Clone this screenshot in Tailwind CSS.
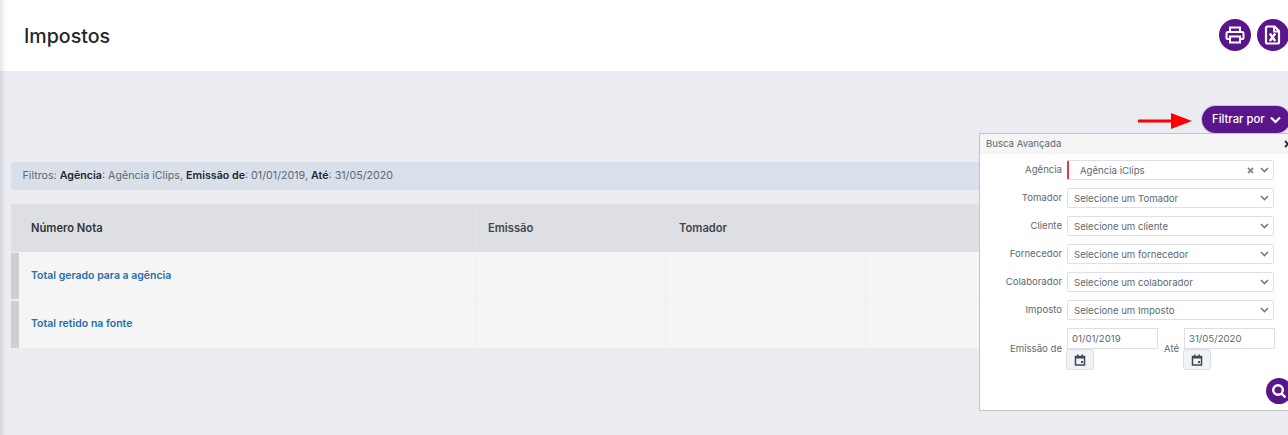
<!DOCTYPE html>
<html lang="pt-BR">
<head>
    <meta charset="UTF-8">
    <meta name="viewport" content="width=device-width, initial-scale=1.0">
    <title>Impostos</title>
    <script src="https://cdn.jsdelivr.net/npm/@tailwindcss/browser@4"></script>
</head>
<body class="bg-[#ebecf1] h-[435px] overflow-hidden relative font-['Inter',sans-serif] text-[#5c6873]">
    <!-- sombra do menu lateral -->
    <div class="absolute left-0 top-0 bottom-0 w-[6px] bg-gradient-to-r from-black/10 to-transparent z-10"></div>

    <header class="bg-white h-[71px] pl-6 flex items-center justify-between">
        <h1 class="text-[19.600px] font-medium text-[#23282c] pt-[2px]">Impostos</h1>
        <div class="flex gap-[6px] w-[69px] shrink-0 pb-[1px]">
            <button class="w-8 h-8 shrink-0 rounded-full bg-[#58168a] flex items-center justify-center">
                <svg class="w-[20px] h-[20px]" viewBox="0 0 20 20" fill="none" stroke="white" stroke-width="2">
                    <path d="M5 7V2.500h10V7"/>
                    <path d="M5 14H2.500a1 1 0 0 1-1-1V8.500a1.500 1.500 0 0 1 1.500-1.500h14a1.500 1.500 0 0 1 1.500 1.500V13a1 1 0 0 1-1 1H15"/>
                    <path d="M5 11.500h10v6H5z"/>
                </svg>
            </button>
            <button class="w-8 h-8 shrink-0 rounded-full bg-[#58168a] flex items-center justify-center">
                <svg class="w-[18px] h-[20px]" viewBox="0 0 18 20" fill="none" stroke="white" stroke-width="2.200">
                    <path d="M3.500 1.500h7l4.500 4.500v11a1.500 1.500 0 0 1-1.500 1.500h-10A1.500 1.500 0 0 1 2 17V3a1.500 1.500 0 0 1 1.500-1.500z"/>
                    <path d="M10 1.500v5h5" stroke-width="1.800"/>
                    <path d="M5.800 8.500l5.400 7.500M11.200 8.500l-5.400 7.500" stroke-width="2.400"/>
                </svg>
            </button>
        </div>
    </header>

    <main class="pl-[11px] pr-[11px]">
        <div class="flex items-center justify-end h-[27px] mt-[34px] -mr-[11px] relative top-[1px]">
            <svg class="w-[54px] h-[16px] mr-[10px] relative top-[1px]" viewBox="0 0 54 16">
                <path d="M1 8h34" stroke="#ff0000" stroke-width="3" stroke-linecap="round"/>
                <path d="M33 0l21 8-21 8z" fill="#ff0000"/>
            </svg>
            <button class="w-[88px] h-[27px] pl-[10px] rounded-l-full rounded-r-full bg-[#58168a] text-white text-[11.300px] font-medium flex items-center gap-[5px] ring-1 ring-[#58168a]/20 shrink-0 -mr-[2px]">
                Filtrar por
                <svg class="w-[11px] h-[8px]" viewBox="0 0 11 8" fill="none" stroke="white" stroke-width="2.200"><path d="M1 1.500l4.500 4.500 4.500-4.500"/></svg>
            </button>
        </div>

        <div class="mt-[30px] h-[28px] bg-[#dae0ea] rounded-[3px] flex items-center pl-[11.500px] pr-3 text-[10.700px] text-[#5c6873]">
            <p>Filtros: <b class="font-semibold text-[#23282c]">Agência</b>: Agência iClips, <b class="font-semibold text-[#23282c]">Emissão de</b>: 01/01/2019, <b class="font-semibold text-[#23282c]">Até</b>: 31/05/2020</p>
        </div>

        <div class="mt-[14px] text-[10.500px]">
            <div class="grid grid-cols-[8px_456px_1px_190px_200px_1fr] h-[48px] bg-[#dedfe3] text-[11.200px] font-semibold text-[#3f454b] items-center">
                <div></div>
                <div class="pl-3 pt-[1px] text-[#2f353a]">Número Nota</div>
                <div class="h-full border-l border-[#e2e3e6]"></div>
                <div class="pl-3 pt-[1px] h-full flex items-center border-r border-[#e2e3e6]">Emissão</div>
                <div class="pl-[13px] pt-[1px] h-full flex items-center border-r border-[#e2e3e6]">Tomador</div>
                <div></div>
            </div>
            <div class="grid grid-cols-[8px_456px_1px_190px_200px_1fr] h-[48px] bg-[#f5f5f5] border-b border-[#f0f0f0] font-semibold text-[#2a6ea8] items-center">
                <div class="h-full border-t border-[#ebecf1] bg-[#cfcfcf]"></div>
                <div class="pl-3 pt-[1px]">Total gerado para a agência</div>
                <div class="h-full border-l border-[#f0f0f0]"></div>
                <div class="h-full border-r border-[#f0f0f0]"></div>
                <div class="h-full border-r border-[#f0f0f0]"></div>
                <div></div>
            </div>
            <div class="grid grid-cols-[8px_456px_1px_190px_200px_1fr] h-[48px] bg-[#f5f5f5] font-semibold text-[#2a6ea8] items-center">
                <div class="h-full border-t border-[#ebecf1] bg-[#cfcfcf]"></div>
                <div class="pl-3">Total retido na fonte</div>
                <div class="h-full border-l border-[#f0f0f0]"></div>
                <div class="h-full border-r border-[#f0f0f0]"></div>
                <div class="h-full border-r border-[#f0f0f0]"></div>
                <div></div>
            </div>
        </div>
    </main>

    <!-- Busca avancada (painel flutuante) -->
    <aside class="absolute left-[979px] top-[133px] w-[320px] h-[278px] bg-white border border-[#c4c4c4] text-[9.600px] z-20">
        <div class="h-[20px] bg-[#f5f5f5] flex items-center pl-[6px] text-[#5c6873] relative">
            Busca Avançada
            <svg class="absolute left-[304px] top-[6px] w-[8px] h-[8px]" viewBox="0 0 8 8" fill="none" stroke="#23282c" stroke-width="1.800"><path d="M1 1l6 6M7 1L1 7"/></svg>
        </div>

        <div class="pt-[6px] flex flex-col gap-[8px]">
            <div class="flex items-center">
                <label class="w-[82px] text-right">Agência</label>
                <div class="ml-[5px] w-[207px] h-[20px] bg-white border border-[#dce0e6] border-l-2 border-l-[#e8384f] rounded-[2px] flex items-center pl-[11px] pr-[4px]">
                    <span class="flex-1 pt-[2px]">Agência iClips</span>
                    <svg class="w-[7px] h-[7px] mr-[6px]" viewBox="0 0 7 7" fill="none" stroke="#888" stroke-width="1.800"><path d="M1 1l5 5M6 1L1 6"/></svg>
                    <svg class="w-[9px] h-[6px]" viewBox="0 0 9 6" fill="none" stroke="#777" stroke-width="1.600"><path d="M1 1l3.500 3.500L8 1"/></svg>
                </div>
            </div>
            <div class="flex items-center">
                <label class="w-[82px] text-right">Tomador</label>
                <div class="ml-[5px] w-[207px] h-[20px] bg-white border border-[#dce0e6] rounded-[2px] flex items-center justify-between pl-[6px] pr-[4px]">
                    <span class="pt-[2px]">Selecione um Tomador</span>
                    <svg class="w-[9px] h-[6px]" viewBox="0 0 9 6" fill="none" stroke="#777" stroke-width="1.600"><path d="M1 1l3.500 3.500L8 1"/></svg>
                </div>
            </div>
            <div class="flex items-center">
                <label class="w-[82px] text-right">Cliente</label>
                <div class="ml-[5px] w-[207px] h-[20px] bg-white border border-[#dce0e6] rounded-[2px] flex items-center justify-between pl-[6px] pr-[4px]">
                    <span class="pt-[2px]">Selecione um cliente</span>
                    <svg class="w-[9px] h-[6px]" viewBox="0 0 9 6" fill="none" stroke="#777" stroke-width="1.600"><path d="M1 1l3.500 3.500L8 1"/></svg>
                </div>
            </div>
            <div class="flex items-center">
                <label class="w-[82px] text-right">Fornecedor</label>
                <div class="ml-[5px] w-[207px] h-[20px] bg-white border border-[#dce0e6] rounded-[2px] flex items-center justify-between pl-[6px] pr-[4px]">
                    <span class="pt-[2px]">Selecione um fornecedor</span>
                    <svg class="w-[9px] h-[6px]" viewBox="0 0 9 6" fill="none" stroke="#777" stroke-width="1.600"><path d="M1 1l3.500 3.500L8 1"/></svg>
                </div>
            </div>
            <div class="flex items-center">
                <label class="w-[82px] text-right">Colaborador</label>
                <div class="ml-[5px] w-[207px] h-[20px] bg-white border border-[#dce0e6] rounded-[2px] flex items-center justify-between pl-[6px] pr-[4px]">
                    <span class="pt-[2px]">Selecione um colaborador</span>
                    <svg class="w-[9px] h-[6px]" viewBox="0 0 9 6" fill="none" stroke="#777" stroke-width="1.600"><path d="M1 1l3.500 3.500L8 1"/></svg>
                </div>
            </div>
            <div class="flex items-center">
                <label class="w-[82px] text-right">Imposto</label>
                <div class="ml-[5px] w-[207px] h-[20px] bg-white border border-[#dce0e6] rounded-[2px] flex items-center justify-between pl-[6px] pr-[4px]">
                    <span class="pt-[2px]">Selecione um Imposto</span>
                    <svg class="w-[9px] h-[6px]" viewBox="0 0 9 6" fill="none" stroke="#777" stroke-width="1.600"><path d="M1 1l3.500 3.500L8 1"/></svg>
                </div>
            </div>
            <div class="flex items-center">
                <label class="w-[82px] text-right">Emissão de</label>
                <div class="ml-[4px] w-[92px]">
                    <div class="ml-[1px] w-[91px] h-[21px] border border-[#dce0e6] flex items-center pl-[4px] pt-[1px]">01/01/2019</div>
                    <button class="w-[28px] h-[21px] bg-[#f2f3f6] border border-[#dce0e6] rounded-[3px] flex items-center justify-center">
                        <svg class="w-[12px] h-[12px]" viewBox="0 0 12 12" fill="none"><path d="M1.500 2.500h9v8.500h-9z" stroke="#3f4a55" stroke-width="1.500"/><path d="M1 2h10v2.500H1zM3 .5h1.500V2H3zM7.500 .5H9V2H7.500zM7 7h2v2H7z" fill="#3f4a55"/></svg>
                    </button>
                </div>
                <label class="ml-[6px] w-[15px]">Até</label>
                <div class="ml-[4px] w-[92px]">
                    <div class="ml-[1px] w-[91px] h-[21px] border border-[#dce0e6] flex items-center pl-[4px] pt-[1px]">31/05/2020</div>
                    <button class="w-[28px] h-[21px] bg-[#f2f3f6] border border-[#dce0e6] rounded-[3px] flex items-center justify-center">
                        <svg class="w-[12px] h-[12px]" viewBox="0 0 12 12" fill="none"><path d="M1.500 2.500h9v8.500h-9z" stroke="#3f4a55" stroke-width="1.500"/><path d="M1 2h10v2.500H1zM3 .5h1.500V2H3zM7.500 .5H9V2H7.500zM7 7h2v2H7z" fill="#3f4a55"/></svg>
                    </button>
                </div>
            </div>
        </div>

        <button class="absolute left-[286px] top-[244px] w-[26px] h-[26px] rounded-full bg-[#58168a] flex items-center justify-center">
            <svg class="w-[16px] h-[16px]" viewBox="0 0 16 16" fill="none" stroke="white" stroke-width="2.400"><circle cx="7" cy="7" r="4.800"/><path d="M10.500 10.500l4 4"/></svg>
        </button>
    </aside>
</body>
</html>
